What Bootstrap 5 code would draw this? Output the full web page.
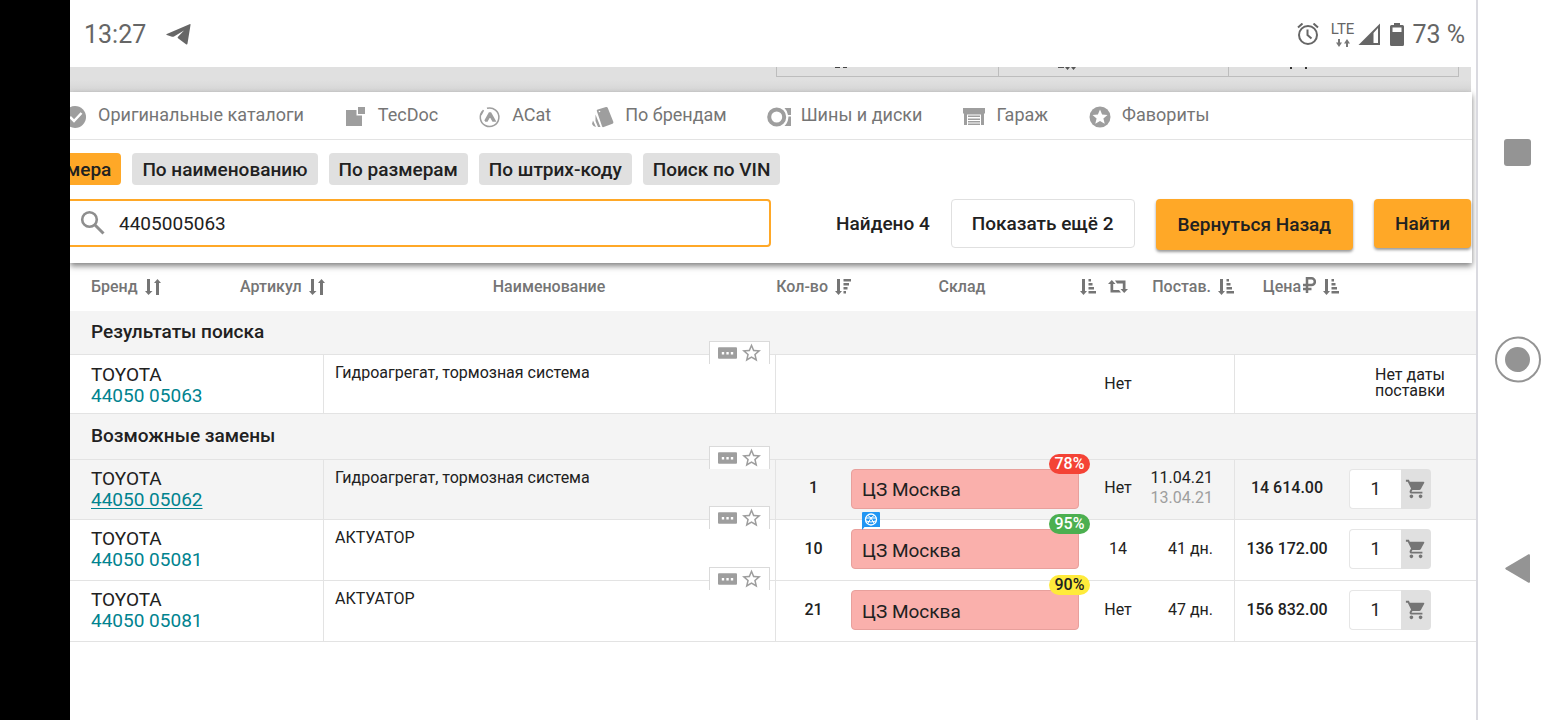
<!DOCTYPE html>
<html lang="ru">
<head>
<meta charset="utf-8">
<meta name="viewport" content="width=device-width, initial-scale=1">
<title>Результаты поиска 4405005063</title>
<link href="https://cdn.jsdelivr.net/npm/bootstrap@5.3.0/dist/css/bootstrap.min.css" rel="stylesheet">
<style>
  :root { --amber: #ffa827; --ink: #212121; --muted: #757575; --rule: #e3e3e3; --icon: #9e9e9e; }
  body { font-family: Roboto, "Liberation Sans", sans-serif; font-size: 16px; line-height: 20px; color: var(--ink); background: #fff; }
  svg { display: block; flex: none; }
  .cutout { width: 70px; background: #000; }
  .sysnav { width: 84px; padding-right: 3px; border-left: 2px solid #dadae0; }
  .sysnav button { height: 208px; }
  .status { height: 67px; padding: 2px 11px 0 14px; font-size: 25px; line-height: 30px; color: #666; }
  .plane { margin-left: 20px; }
  .lte { font-size: 15px; line-height: 14px; }
  .lte svg { margin-top: 3px; }
  .under { height: 25px; margin-right: 5px; padding-right: 12px; background: linear-gradient(#e0e0e0 50%, #d6d6d6); }
  .under-cell { height: 10px; border: solid #bdbdbd; border-width: 0 0 1px 1px; background: #e0e0e0; }
  .under-cell:last-child { border-right-width: 1px; }
  .panel { margin-right: 4px; background: #fff; box-shadow: 0 3px 6px rgba(0,0,0,.5); z-index: 5; }
  .sections { height: 48px; gap: 40px; border-bottom: 1px solid var(--rule); font-size: 18px; }
  .sections a { color: var(--muted); gap: 10px; text-decoration: none; white-space: nowrap; }
  .sections a:first-child { margin-left: -6px; }
  .sections svg { color: var(--icon); margin-top: 3px; }
  .sections span { padding-bottom: 1px; }
  .modes { padding-top: 13px; gap: 11px; }
  .mode { height: 32px; padding: 2px 10px 0; border: 0; border-radius: 4px; background: #e0e0e0; color: var(--ink); font-size: 19px; font-weight: 500; white-space: nowrap; }
  .mode.current { margin-left: -14px; background: var(--amber); }
  .search { padding: 14px 1px 13px 0; }
  .query { height: 48px; margin-left: -20px; padding-left: 28px; border: 2px solid var(--amber); border-radius: 4px; gap: 13px; }
  .query input { border: 0; outline: 0; padding: 2px 0 0; background: none; font-size: 19px; color: var(--ink); min-width: 0; }
  .found { padding: 0 21px 0 65px; font-size: 19px; font-weight: 500; line-height: 50px; white-space: nowrap; }
  .acts { gap: 21px; }
  .act { height: 49px; padding: 0 21px; border: 0; border-radius: 4px; background: var(--amber); color: var(--ink); font-size: 19px; font-weight: 500; box-shadow: 0 2px 3px rgba(0,0,0,.4); white-space: nowrap; }
  .act.tall { height: 51px; padding: 0 22px; }
  .act.plain { padding: 0 20px; background: #fff; border: 1px solid #e0e0e0; box-shadow: none; }
  .parts { table-layout: fixed; width: 100%; border-collapse: separate; border-spacing: 0; }
  .parts th, .parts td { padding: 0; }
  .parts thead th { height: 48px; font-weight: 500; color: var(--muted); white-space: nowrap; }
  .parts thead div { gap: 7px; }
  .parts .group th { height: 44px; padding: 0 0 1px 21px; background: #f4f4f4; border-bottom: 1px solid var(--rule); font-size: 19px; font-weight: 500; }
  .parts .group.next th { height: 46px; }
  .item td { height: 61px; border-bottom: 1px solid var(--rule); padding-bottom: 3px; }
  .item.short td { height: 59px; padding-bottom: 1px; }
  .item.hovered td { height: 60px; background: #f4f4f4; }
  .item .brand { padding: 0 0 2px 21px; font-size: 19px; line-height: 21px; }
  .item.short .brand { padding: 2px 0 0 21px; }
  .brand a { color: #00838f; text-decoration: none; }
  .hovered .brand a { text-decoration: underline; text-underline-offset: 2px; }
  .item .name, .item.short .name { padding: 8px 0 0 11px; vertical-align: top; }
  .item .name, .item .qty, .item .price { border-left: 1px solid var(--rule); }
  .item .price, .item .qty { font-weight: 500; }
  .tools { position: absolute; top: -14px; right: 5px; width: 61px; height: 23px; padding: 0 8px 1px; background: #fff; border: solid #dadada; border-width: 1px 1px 0; z-index: 1; }
  .tools button, .sysnav button { border: 0; background: none; padding: 0; color: var(--icon); }
  .item .stock, .item .order { padding: 0 0 2px; }
  .item.short .order { padding: 0 0 3px 36px; line-height: 16px; }
  .store { width: 228px; height: 40px; padding: 3px 10px 0; border: 1px solid #e8a09c; border-radius: 4px; background: #fab0ac; font-size: 19px; }
  .rate { position: absolute; top: -16px; right: -12px; width: 41px; height: 20px; border-radius: 10px; font-size: 16px; font-weight: 500; line-height: 20px; text-align: center; color: #fff; }
  .note { position: absolute; left: 10px; top: -18px; }
  .red { background: #f44336; } .green { background: #4caf50; } .yellow { background: #ffeb3b; color: var(--ink); }
  .days { padding-right: 21px !important; }
  .later { color: #9e9e9e; }
  .buy { margin-left: 10px; width: 82px; height: 40px; }
  .buy input { width: 52px; border: 1px solid #e6e6e6; border-right: 0; border-radius: 4px 0 0 4px; font-size: 18px; text-align: center; color: var(--ink); background: #fff; }
  .buy button { width: 30px; border: 0; border-radius: 0 4px 4px 0; background: #e0e0e0; color: var(--muted); padding: 0 0 0 4px; }
  .rouble { margin: -5px 0 0 -5px; }
</style>
<script src="https://cdn.jsdelivr.net/npm/bootstrap@5.3.0/dist/js/bootstrap.bundle.min.js"></script>
</head>
<body class="d-flex min-vh-100">
<svg class="d-none" aria-hidden="true">
  <symbol id="both" viewBox="0 0 16 16"><path fill="currentColor" d="M2 0h3v12h2.500L3.500 16 0 12h2zM11 16h3V4h2L12.500 0 9 4h2z"/></symbol>
  <symbol id="desc" viewBox="0 0 16 16"><path fill="currentColor" d="M2 0h3v12h2L3.500 16 0 12h2zM8.500 0H16v2.500H8.500zM8.500 4H14v2.500H8.500zM8.500 8h4v2.500h-4zM8.500 12H11v2.500H8.500z"/></symbol>
  <symbol id="asc" viewBox="0 0 16 16"><path fill="currentColor" d="M2 0h3v12h2L3.500 16 0 12h2zM8.500 0H11v2.500H8.500zM8.500 4h4v2.500h-4zM8.500 8H14v2.500H8.500zM8.500 12H16v2.500H8.500z"/></symbol>
  <symbol id="dots" viewBox="0 0 20 12"><rect width="20" height="12" rx="1" fill="currentColor"/><path fill="#fff" d="M4 5h2.500v2.500H4zM8.800 5h2.500v2.500H8.800zM13.500 5H16v2.500h-2.500z"/></symbol>
  <symbol id="star" viewBox="2 2 20 19"><path fill="currentColor" d="M22 9.240l-7.190-.62L12 2 9.190 8.630 2 9.240l5.460 4.730L5.820 21 12 17.270 18.180 21l-1.630-7.030L22 9.240zM12 15.400l-3.760 2.270 1-4.280-3.320-2.880 4.380-.38L12 6.100l1.710 4.040 4.380.38-3.320 2.880 1 4.280L12 15.400z"/></symbol>
  <symbol id="cart" viewBox="0 0 24 24"><path fill="currentColor" d="M7 18c-1.100 0-1.990.9-1.990 2S5.900 22 7 22s2-.9 2-2-.9-2-2-2zM1 2v2h2l3.600 7.590-1.350 2.450c-.16.28-.25.61-.25.96 0 1.100.9 2 2 2h12v-2H7.420c-.14 0-.25-.11-.25-.25l.03-.12.9-1.630h7.450c.75 0 1.410-.41 1.750-1.030l3.580-6.490A1 1 0 0 0 20 4H5.210l-.94-2H1zm16 16c-1.100 0-1.990.9-1.990 2s.89 2 1.990 2 2-.9 2-2-.9-2-2-2z"/></symbol>
</svg>

<div class="cutout flex-shrink-0"></div>

<main class="flex-fill d-flex flex-column overflow-hidden">
  <header class="status d-flex align-items-center">
    <span>13:27</span>
    <svg class="plane" width="25" height="24" viewBox="0 0 25 24"><path fill="#666" d="M23.500 1.200Q24.800.700 24.500 2L21.500 20.500Q21.200 22 20 21.200L12 15.300Q11.200 14.600 12 13.800L18 7.500 8 13.500Q7 14 6 13.700L.8 12Q-.2 11.500.8 11z"/></svg>
    <svg class="ms-auto" width="22" height="24" viewBox="0 0 22 24" fill="none" stroke="#666" stroke-width="2"><circle cx="11" cy="12" r="9"/><path d="M10.500 6.500V12l4 3.500M1 4.500 5.500.500M21 4.500 16.500.500"/></svg>
    <span class="lte ms-2 ps-1 text-center">LTE<svg class="mx-auto" width="14" height="8" viewBox="0 0 14 8"><path fill="#777" d="M2 0h2v3.500h2L3 8 0 3.500h2zM10 8h2V4.500h2L11 0 8 4.500h2z"/></svg></span>
    <svg class="ms-1" width="24" height="24" viewBox="0 0 24 24"><path fill="#666" d="M.500 22 22 .500V22zM15.500 10v10H20V5z" fill-rule="evenodd"/></svg>
    <svg class="ms-2 me-2" width="14" height="24" viewBox="0 0 14 24"><path fill="#666" fill-rule="evenodd" d="M4 0h6v2h2.500Q14 2 14 3.500v18q0 1.500-1.500 1.500h-11Q0 23 0 21.500v-18Q0 2 1.500 2H4zM2.500 4.500V9h9V4.500z"/></svg>
    <span>73 %</span>
  </header>

  <div class="under d-flex justify-content-end">
    <div class="under-cell" style="width:222px"><svg class="ms-5" width="28" height="3"><path fill="#444" d="M10 0h5v1h-5zM18 0h4v1h-4z"/></svg></div>
    <div class="under-cell" style="width:230px"><svg class="ms-5" width="34" height="4"><path fill="#555" d="M11 0h6v1h-6zM18 0h5l-2.500 3zM24 0h5l-2.500 3z"/></svg></div>
    <div class="under-cell" style="width:231px"><svg class="ms-5" width="34" height="4"><path fill="#333" d="M13 0h2v2h-2zM28 0h2v2h-2z"/></svg></div>
  </div>

  <section class="panel position-relative">
    <nav class="sections d-flex align-items-center">
      <a href="#" class="d-flex align-items-center"><svg width="24" height="24" viewBox="0 0 24 24"><circle cx="11" cy="12" r="11" fill="currentColor"/><path d="m6 12 4 4 7.500-8" fill="none" stroke="#fff" stroke-width="2.500"/></svg><span>Оригинальные каталоги</span></a>
      <a href="#" class="d-flex align-items-center"><svg width="24" height="24" viewBox="0 0 24 24"><path fill="currentColor" d="M2 5h10.500v5.500H18V21H2zM14 2h7v7h-7z"/></svg><span>TecDoc</span></a>
      <a href="#" class="d-flex align-items-center"><svg width="24" height="24" viewBox="0 0 24 24" fill="none" stroke="currentColor" stroke-width="1.500"><path d="M5.500 5.200a9.300 9.300 0 1 0 3.500-1.900M3 10l2.500-4.800"/><path stroke-width="1.700" d="M7 16h2l3-5.500 3 5.500h2L12.600 8h-1.200L7 16"/></svg><span>ACat</span></a>
      <a href="#" class="d-flex align-items-center"><svg width="24" height="24" viewBox="0 0 24 24" fill="currentColor"><path d="M6.800 4.500 15 2q1.200-.3 1.700.8l5.600 14q.5 1.300-.8 1.900l-8.800 3.300q-1.200.5-1.700-.7L5.800 6q-.4-1.200 1-1.500zM4.500 9.500 9.500 22H7L4.500 16zM2 15.500 5 22l-2.500-1-1.500-2z"/><circle cx="8.500" cy="6.500" r=".8" fill="#fff"/></svg><span>По брендам</span></a>
      <a href="#" class="d-flex align-items-center"><svg width="24" height="24" viewBox="0 0 24 24"><circle cx="9.700" cy="12" r="7.500" fill="none" stroke="currentColor" stroke-width="4"/><path fill="currentColor" d="M17.500 3H24v7h-3q-.5-4-3.500-7zM21.500 11.500H24V21h-6.500q3.500-3 4-9.500z"/></svg><span>Шины и диски</span></a>
      <a href="#" class="d-flex align-items-center"><svg width="24" height="24" viewBox="0 0 24 24"><path fill="currentColor" d="M1 3h22v5.500h-1V20h-3V9.500H5V20H2V8.500H1zM6 10.500h12V12H6zM6 13.500h12V15H6zM6 16h12v1.500H6zM6 18.500h12V20H6z"/></svg><span>Гараж</span></a>
      <a href="#" class="d-flex align-items-center"><svg width="24" height="24" viewBox="0 0 24 24"><circle cx="12" cy="12" r="10.500" fill="currentColor"/><path fill="#fff" d="m12 4.500 2.100 5 5.400.5-4.100 3.500 1.300 5.300L12 16l-4.700 2.800 1.300-5.300L4.500 10l5.400-.5z"/></svg><span>Фавориты</span></a>
    </nav>

    <div class="modes d-flex">
      <button class="mode current">мера</button>
      <button class="mode">По наименованию</button>
      <button class="mode">По размерам</button>
      <button class="mode">По штрих-коду</button>
      <button class="mode">Поиск по VIN</button>
    </div>

    <form class="search d-flex align-items-start">
      <label class="query flex-fill d-flex align-items-center">
        <svg width="26" height="26" viewBox="0 0 26 26" fill="none" stroke="#8e8e8e"><circle cx="9.500" cy="9.500" r="7.300" stroke-width="2.600"/><path stroke-width="3" d="m15 15 8.500 8.500"/></svg>
        <input class="flex-fill" type="text" value="4405005063" aria-label="Номер детали">
      </label>
      <span class="found">Найдено 4</span>
      <div class="acts d-flex align-items-start">
        <button type="button" class="act plain">Показать ещё 2</button>
        <button type="button" class="act tall">Вернуться Назад</button>
        <button type="button" class="act">Найти</button>
      </div>
    </form>
  </section>

  <table class="parts">
    <colgroup><col style="width:170px"><col style="width:83px"><col><col style="width:76px"><col style="width:245px"><col style="width:44px"><col style="width:94px"><col style="width:105px"><col style="width:137px"></colgroup>
    <thead>
      <tr>
        <th><div class="d-flex align-items-center" style="padding-left:21px">Бренд<svg width="16" height="16"><use href="#both"/></svg></div></th>
        <th><div class="d-flex align-items-center">Артикул<svg width="16" height="16"><use href="#both"/></svg></div></th>
        <th><div class="text-center">Наименование</div></th>
        <th><div class="d-flex align-items-center justify-content-end">Кол-во<svg width="16" height="16"><use href="#desc"/></svg></div></th>
        <th><div class="d-flex align-items-center"><span class="flex-fill text-center">Склад</span><svg width="16" height="16"><use href="#asc"/></svg></div></th>
        <th><div><svg class="mx-auto" width="20" height="14" viewBox="0 0 20 14"><path fill="#757575" d="M3.800 0 7.500 4H5.200v6H11l2 2.500H2.500V4H0zM16.200 13 12.500 9h2.300V3.500H9L7 .500h10.500V9H20z"/></svg></div></th>
        <th><div class="d-flex align-items-center justify-content-end">Постав.<svg width="16" height="16"><use href="#asc"/></svg></div></th>
        <th><div class="d-flex align-items-center justify-content-end">Цена<svg class="rouble" width="13" height="16" viewBox="0 0 13 16"><path fill="none" stroke="#757575" stroke-width="2.500" d="M4 16V1.300h4.500a3.300 3.300 0 0 1 0 6.700H0M0 12h8.500"/></svg><svg width="16" height="16"><use href="#asc"/></svg></div></th>
        <th></th>
      </tr>
    </thead>
    <tbody>
      <tr class="group"><th colspan="9">Результаты поиска</th></tr>
      <tr class="item short">
        <td class="brand" colspan="2">TOYOTA<br><a href="#">44050 05063</a></td>
        <td class="name position-relative">Гидроагрегат, тормозная система
          <div class="tools d-flex align-items-center justify-content-between"><button aria-label="Комментарий"><svg width="19" height="12"><use href="#dots"/></svg></button><button aria-label="В избранное"><svg width="19" height="19"><use href="#star"/></svg></button></div></td>
        <td class="qty"></td><td class="stock"></td>
        <td class="text-center">Нет</td><td class="days"></td><td class="price"></td>
        <td class="order">Нет даты<br>поставки</td>
      </tr>
      <tr class="group next"><th colspan="9">Возможные замены</th></tr>
      <tr class="item hovered">
        <td class="brand" colspan="2">TOYOTA<br><a href="#">44050 05062</a></td>
        <td class="name position-relative">Гидроагрегат, тормозная система
          <div class="tools d-flex align-items-center justify-content-between"><button aria-label="Комментарий"><svg width="19" height="12"><use href="#dots"/></svg></button><button aria-label="В избранное"><svg width="19" height="19"><use href="#star"/></svg></button></div></td>
        <td class="qty text-center">1</td>
        <td class="stock"><div class="store d-flex align-items-center position-relative">ЦЗ Москва<span class="rate red">78%</span></div></td>
        <td class="text-center">Нет</td>
        <td class="days text-end">11.04.21<br><span class="later">13.04.21</span></td>
        <td class="price text-center">14 614.00</td>
        <td class="order"><div class="buy d-flex"><input type="text" value="1" aria-label="Количество"><button aria-label="В корзину"><svg width="22" height="22"><use href="#cart"/></svg></button></div></td>
      </tr>
      <tr class="item">
        <td class="brand" colspan="2">TOYOTA<br><a href="#">44050 05081</a></td>
        <td class="name position-relative">АКТУАТОР
          <div class="tools d-flex align-items-center justify-content-between"><button aria-label="Комментарий"><svg width="19" height="12"><use href="#dots"/></svg></button><button aria-label="В избранное"><svg width="19" height="19"><use href="#star"/></svg></button></div></td>
        <td class="qty text-center">10</td>
        <td class="stock"><div class="store d-flex align-items-center position-relative">ЦЗ Москва<span class="rate green">95%</span>
          <svg class="note" width="18" height="18" viewBox="0 0 18 18"><path fill="#2196f3" d="M1 0h16q1 0 1 1v14H2.500L0 18V1q0-1 1-1z"/><g fill="none" stroke="#fff"><circle cx="9" cy="7.500" r="5.500" stroke-width="1.300"/><path d="m3.500 6 11 0M9 6 5.500 12M9 6l3.500 6M6 3.500 9 6l3-2.500M4 9l5 1 5-1"/></g></svg></div></td>
        <td class="text-center">14</td>
        <td class="days text-end">41 дн.</td>
        <td class="price text-center">136 172.00</td>
        <td class="order"><div class="buy d-flex"><input type="text" value="1" aria-label="Количество"><button aria-label="В корзину"><svg width="22" height="22"><use href="#cart"/></svg></button></div></td>
      </tr>
      <tr class="item">
        <td class="brand" colspan="2">TOYOTA<br><a href="#">44050 05081</a></td>
        <td class="name position-relative">АКТУАТОР
          <div class="tools d-flex align-items-center justify-content-between"><button aria-label="Комментарий"><svg width="19" height="12"><use href="#dots"/></svg></button><button aria-label="В избранное"><svg width="19" height="19"><use href="#star"/></svg></button></div></td>
        <td class="qty text-center">21</td>
        <td class="stock"><div class="store d-flex align-items-center position-relative">ЦЗ Москва<span class="rate yellow">90%</span></div></td>
        <td class="text-center">Нет</td>
        <td class="days text-end">47 дн.</td>
        <td class="price text-center">156 832.00</td>
        <td class="order"><div class="buy d-flex"><input type="text" value="1" aria-label="Количество"><button aria-label="В корзину"><svg width="22" height="22"><use href="#cart"/></svg></button></div></td>
      </tr>
    </tbody>
  </table>
</main>

<aside class="sysnav flex-shrink-0 d-flex flex-column justify-content-center">
  <button aria-label="Обзор"><svg class="mx-auto" width="27" height="27"><rect width="27" height="27" rx="3" fill="#949494"/></svg></button>
  <button aria-label="Домой"><svg class="mx-auto" width="48" height="48" viewBox="0 0 48 48"><circle cx="24" cy="23.500" r="22" fill="none" stroke="#949494" stroke-width="2"/><circle cx="23.500" cy="23.500" r="12.500" fill="#949494"/></svg></button>
  <button aria-label="Назад"><svg class="mx-auto" width="25" height="29" viewBox="0 0 25 29"><path fill="#949494" d="M23.500.300Q25-.3 25 1.500v26q0 1.800-1.500 1.200L1 15.600Q-.5 14.500 1 13.400z"/></svg></button>
</aside>
</body>
</html>
